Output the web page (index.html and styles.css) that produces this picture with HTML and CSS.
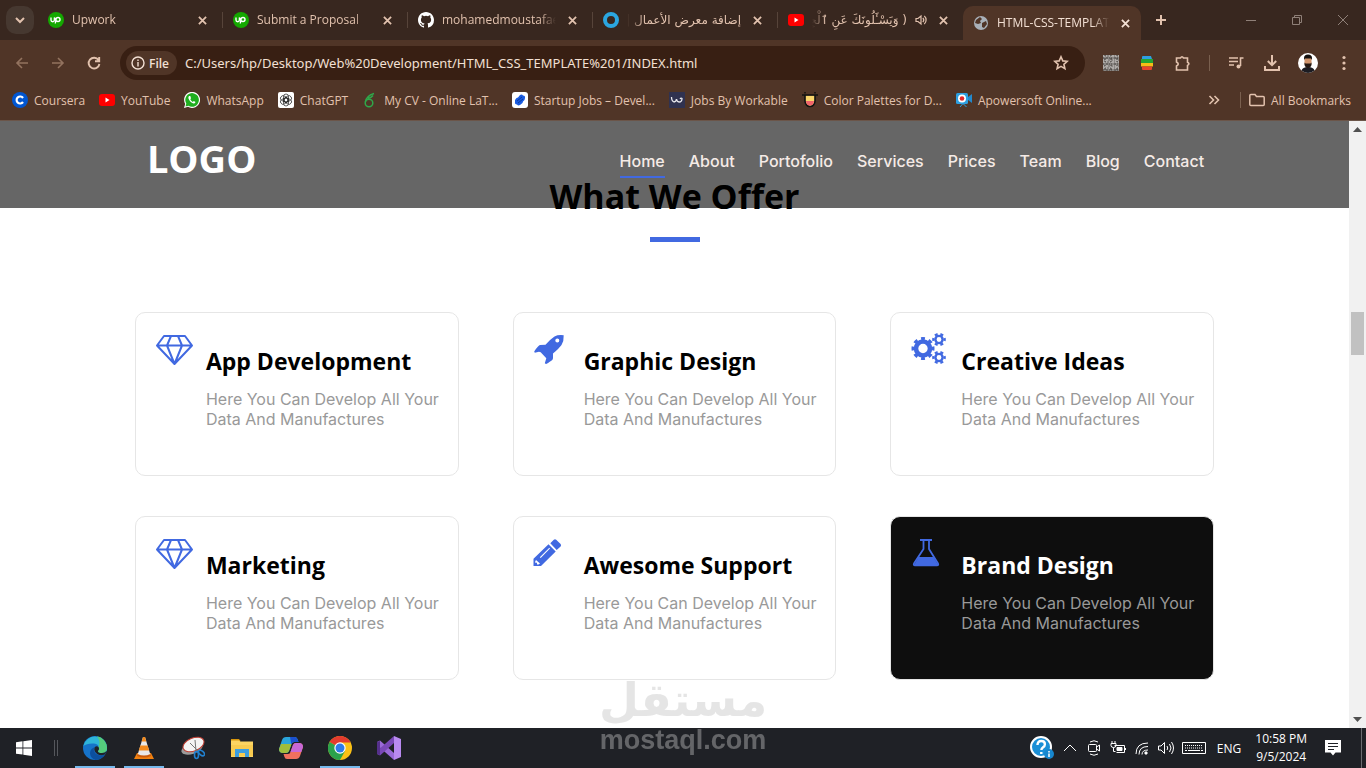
FILE: index.html
```html
<!DOCTYPE html>
<html lang="en">
<head>
    <meta charset="UTF-8">
    <meta name="viewport" content="width=device-width, initial-scale=1.0">
    <title>HTML-CSS-TEMPLATE</title>
    <link rel="stylesheet" href="styles.css">
</head>
<body>
    <!-- Tab strip -->
    <div class="tab-strip">
        <button class="tab-search" aria-label="Search tabs">
            <svg width="10" height="8" viewBox="0 0 10 8" fill="none" stroke="currentColor" stroke-width="2"><path d="M1 2l4 4 4-4"/></svg>
        </button>
        <div class="tab">
            <svg class="icon" viewBox="0 0 16 16"><circle cx="8" cy="8" r="8" fill="#14a800"/><path d="M3 5.500v2.500a1.700 1.700 0 0 0 3.400 0V5.500c.8 2.500 1.600 4 3.600 4a2 2 0 1 0-2-2L7.300 11.500" fill="none" stroke="#fff" stroke-width="1.400"/></svg>
            <span class="tab-title">Upwork</span>
            <button class="close" aria-label="Close tab"><svg viewBox="0 0 10 10"><path d="M1 1l8 8M9 1l-8 8"/></svg></button>
        </div>
        <div class="tab">
            <svg class="icon" viewBox="0 0 16 16"><circle cx="8" cy="8" r="8" fill="#14a800"/><path d="M3 5.500v2.500a1.700 1.700 0 0 0 3.400 0V5.500c.8 2.500 1.600 4 3.600 4a2 2 0 1 0-2-2L7.300 11.500" fill="none" stroke="#fff" stroke-width="1.400"/></svg>
            <span class="tab-title">Submit a Proposal</span>
            <button class="close" aria-label="Close tab"><svg viewBox="0 0 10 10"><path d="M1 1l8 8M9 1l-8 8"/></svg></button>
        </div>
        <div class="tab">
            <svg class="icon" viewBox="0 0 16 16" fill="#fff"><path d="M8 0C3.580 0 0 3.580 0 8c0 3.540 2.290 6.530 5.470 7.590.4.070.550-.170.550-.380 0-.190-.010-.820-.010-1.490-2.010.370-2.530-.490-2.690-.940-.090-.230-.480-.940-.820-1.130-.280-.150-.680-.520-.010-.530.630-.010 1.080.580 1.230.820.720 1.210 1.870.870 2.330.660.070-.520.280-.870.510-1.070-1.780-.2-3.640-.890-3.640-3.950 0-.870.310-1.590.820-2.150-.080-.2-.360-1.020.080-2.120 0 0 .670-.210 2.200.820a7.600 7.600 0 0 1 4 0c1.530-1.040 2.200-.820 2.200-.820.440 1.100.160 1.920.080 2.120.510.560.820 1.270.820 2.150 0 3.070-1.870 3.750-3.650 3.950.290.250.540.730.540 1.480 0 1.070-.010 1.930-.010 2.200 0 .210.150.460.550.380A8 8 0 0 0 16 8c0-4.420-3.580-8-8-8z"/></svg>
            <span class="tab-title">mohamedmoustafaegy</span>
            <button class="close" aria-label="Close tab"><svg viewBox="0 0 10 10"><path d="M1 1l8 8M9 1l-8 8"/></svg></button>
        </div>
        <div class="tab">
            <svg class="icon" viewBox="0 0 16 16"><circle cx="8" cy="8" r="6" fill="none" stroke="#2ba6e0" stroke-width="4"/></svg>
            <span class="tab-title rtl" dir="rtl" lang="ar">إضافة معرض الأعمال |</span>
            <button class="close" aria-label="Close tab"><svg viewBox="0 0 10 10"><path d="M1 1l8 8M9 1l-8 8"/></svg></button>
        </div>
        <div class="tab tab-last">
            <svg class="icon" viewBox="0 0 16 16"><rect y="2" width="16" height="12" rx="3" fill="#f00"/><path d="M6.500 5.500v5l4-2.500z" fill="#fff"/></svg>
            <span class="tab-title rtl" dir="rtl" lang="ar">( وَيَسْـَٔلُونَكَ عَنِ ٱلْجِبَالِ</span>
            <svg class="sound" viewBox="0 0 12 12" fill="none" stroke="currentColor" stroke-width="1.200"><path d="M1 4.500v3h2l3 2.500V2L3 4.500zM7.800 4c1.200 1.200 1.200 2.800 0 4M9.300 2c2.400 2.200 2.400 5.800 0 8"/></svg>
            <button class="close" aria-label="Close tab"><svg viewBox="0 0 10 10"><path d="M1 1l8 8M9 1l-8 8"/></svg></button>
        </div>
        <div class="tab tab-active">
            <svg class="icon" viewBox="0 0 16 16"><circle cx="8" cy="8" r="7" fill="#a9b0b8"/><path d="M3 5l4-3 2 2-2 2 1 2-3 1-3-1zM9 8l4-2 1 3-3 4-2-1z" fill="#503527"/></svg>
            <span class="tab-title">HTML-CSS-TEMPLATE</span>
            <button class="close" aria-label="Close tab"><svg viewBox="0 0 10 10"><path d="M1 1l8 8M9 1l-8 8"/></svg></button>
        </div>
        <button class="new-tab" aria-label="New tab">
            <svg width="12" height="12" viewBox="0 0 12 12" stroke="currentColor" stroke-width="2"><path d="M6 1v10M1 6h10"/></svg>
        </button>
        <div class="window-controls">
            <button aria-label="Minimize"><svg viewBox="0 0 10 10"><path d="M0 5.500h10"/></svg></button>
            <button aria-label="Restore"><svg viewBox="0 0 10 10"><path d="M.5 2.500h7v7h-7zM2.500 2.500v-2h7v7h-2"/></svg></button>
            <button aria-label="Close"><svg viewBox="0 0 10 10"><path d="M0 0l10 10M10 0L0 10"/></svg></button>
        </div>
    </div>

    <!-- Toolbar -->
    <div class="toolbar">
        <button class="tool dim" aria-label="Back"><svg class="icon" viewBox="0 0 16 16"><path d="M14 8H3M8 3L3 8l5 5"/></svg></button>
        <button class="tool dim" aria-label="Forward"><svg class="icon" viewBox="0 0 16 16"><path d="M2 8h11M8 3l5 5-5 5"/></svg></button>
        <button class="tool" aria-label="Reload"><svg class="icon" viewBox="0 0 16 16"><path d="M12.500 5a5.400 5.400 0 1 0 .9 4M13.200 2v4.200H9" stroke-width="1.900"/></svg></button>
        <div class="omnibox">
            <button class="file-chip">
                <svg width="14" height="14" viewBox="0 0 14 14" fill="none" stroke="currentColor" stroke-width="1.400"><circle cx="7" cy="7" r="6"/><path d="M7 6v4.500M7 3.500V5"/></svg>
                File
            </button>
            <input type="text" aria-label="Address" value="C:/Users/hp/Desktop/Web%20Development/HTML_CSS_TEMPLATE%201/INDEX.html">
            <button class="tool" aria-label="Bookmark this page"><svg class="icon" viewBox="0 0 16 16"><path d="M8 1.800l1.800 4.100 4.500.4-3.400 3 1 4.400L8 11.400l-3.900 2.300 1-4.400-3.400-3 4.500-.4z"/></svg></button>
        </div>
        <div class="extensions">
            <button class="tool" aria-label="QR code">
                <svg class="icon" viewBox="0 0 16 16"><rect width="16" height="16" fill="#8a8683" stroke="none"/><path d="M0 1h16M0 7h16M0 13h16" stroke="#d2cecb" stroke-width="1" stroke-dasharray="2 1 1 2 1 1 3 1"/><path d="M0 3h16M0 9h16M0 15h16" stroke="#4b4643" stroke-width="1" stroke-dasharray="1 2 2 1 1 1"/><path d="M0 5h16M0 11h16" stroke="#d2cecb" stroke-width="1" stroke-dasharray="1 1 3 2 1 2"/><path d="M2 0v16M8 0v16M14 0v16" stroke="#3b3633" stroke-width="1" stroke-dasharray="1 2 2 1 1 3"/></svg>
            </button>
            <button class="tool" aria-label="Color picker">
                <svg class="icon" viewBox="0 0 16 16" stroke="none"><path d="M3 2q0-1 1-1h8l1 3H3z" fill="#2d9fe0"/><path d="M2 4h12v4H2z" fill="#23a532"/><path d="M2 8h12v3.500H2z" fill="#f6bd16"/><path d="M3 11.500h10V14q0 1-1 1H4q-1 0-1-1z" fill="#e5442c"/></svg>
            </button>
            <button class="tool" aria-label="Extensions"><svg class="icon" viewBox="0 0 16 16"><path d="M1.500 3h4q1.500-2.500 3 0h4v4.200q2.800 1.500 0 3.200V15h-11v-4q3.500-2 0-4z"/></svg></button>
            <span class="divider"></span>
            <button class="tool" aria-label="Media"><svg class="icon" viewBox="0 0 16 16"><path d="M1 3h9M1 6.500h9M1 10h5M15.500 3h-3v8"/><circle cx="10.500" cy="11.500" r="2" fill="currentColor" stroke="none"/></svg></button>
            <button class="tool" aria-label="Downloads"><svg class="icon" viewBox="0 0 16 16"><path d="M8 0v10M3.800 6L8 10.200 12.200 6M1 11v4h14v-4" stroke-width="2"/></svg></button>
            <button class="tool" aria-label="Profile">
                <svg width="20" height="20" viewBox="0 0 20 20" stroke="none"><circle cx="10" cy="10" r="10" fill="#fff"/><path d="M3.500 17.500q1-3.500 6.500-3.500t6.500 3.500A10 10 0 0 1 3.500 17.500z" fill="#1c1c22"/><rect x="6.500" y="3.500" width="7" height="10" rx="3.500" fill="#d0946c"/><path d="M6 7V5q0-3.500 4-3.500T14 5v2l-1-1.500H7z" fill="#15110f"/><path d="M6.500 9.500l1 1h5l1-1v2.500q-1 3-3.500 3t-3.500-3z" fill="#241813"/></svg>
            </button>
            <button class="tool" aria-label="Menu"><svg class="icon" viewBox="0 0 16 16" stroke="none" fill="currentColor"><circle cx="8" cy="2.500" r="1.600"/><circle cx="8" cy="8" r="1.600"/><circle cx="8" cy="13.500" r="1.600"/></svg></button>
        </div>
    </div>

    <!-- Bookmarks -->
    <nav class="bookmarks" aria-label="Bookmarks">
        <a href="#"><svg class="icon" viewBox="0 0 16 16"><circle cx="8" cy="8" r="8" fill="#0056d2"/><path d="M11 6a3.500 3.500 0 1 0 0 4" fill="none" stroke="#fff" stroke-width="2.200"/></svg>Coursera</a>
        <a href="#"><svg class="icon" viewBox="0 0 16 16"><rect y="2" width="16" height="12" rx="3" fill="#f00"/><path d="M6.500 5.500v5l4-2.500z" fill="#fff"/></svg>YouTube</a>
        <a href="#"><svg class="icon" viewBox="0 0 16 16"><path d="M0 16l1.200-4A8 8 0 1 1 4 14.800z" fill="#fff"/><path d="M1.500 14.500l.8-3A6.800 6.800 0 1 1 4.500 13.700z" fill="#1fae1f"/><path d="M5 4q-1 1-.5 2.500 1.500 4 5 5 1.500 0 2-1.500L9.800 9l-1 .9Q7 9 6.300 7.300L7 6.200 6.300 4z" fill="#fff"/></svg>WhatsApp</a>
        <a href="#"><svg class="icon" viewBox="0 0 16 16"><rect width="16" height="16" rx="2" fill="#fff"/><g fill="none" stroke="#222" stroke-width=".7"><rect x="5.500" y="2" width="5" height="8" rx="2.500"/><rect x="5.500" y="2" width="5" height="8" rx="2.500" transform="rotate(60 8 8)"/><rect x="5.500" y="2" width="5" height="8" rx="2.500" transform="rotate(120 8 8)"/><rect x="5.500" y="2" width="5" height="8" rx="2.500" transform="rotate(180 8 8)"/><rect x="5.500" y="2" width="5" height="8" rx="2.500" transform="rotate(240 8 8)"/><rect x="5.500" y="2" width="5" height="8" rx="2.500" transform="rotate(300 8 8)"/></g></svg>ChatGPT</a>
        <a href="#"><svg class="icon" viewBox="0 0 16 16" fill="none" stroke="#2fa84a" stroke-width="1.500"><circle cx="7" cy="11" r="3.800"/><path d="M3.500 10Q4 4 12 1.500M6 6.500Q9 6 11 3.500"/></svg>My CV - Online LaT...</a>
        <a href="#"><svg class="icon" viewBox="0 0 16 16"><rect width="16" height="16" rx="3" fill="#fff"/><path d="M3 8l1.500-2L6 5.500 8 3q2-1 3 .5 2.500 0 2 2.500l-.5 2-1.500 1.500-.5 1.500L8 13q-2 1-3-.5-2.500-.5-2-2.500z" fill="#1a5be0"/><path d="M5 9l5-4M6 11l5-4" stroke="#0a3ca0" fill="none"/></svg>Startup Jobs – Devel...</a>
        <a href="#"><svg class="icon" viewBox="0 0 16 16"><rect width="16" height="16" fill="#303250"/><path d="M2.500 5q0 4 2.500 5 2 0 2.500-3 .5 3 2.500 3 3 0 3-3.500-1-1-2 .5" fill="none" stroke="#e8e8ee" stroke-width="1.300"/></svg>Jobs By Workable</a>
        <a href="#"><svg class="icon" viewBox="0 0 16 16"><path d="M0 3h16M3 3.500V9a5 5.500 0 0 0 10 0V3.500" fill="#f9d56b" stroke="#111" stroke-width="1.600"/><path d="M4 9h8a4 4.500 0 0 1-8 0z" fill="#f0636b"/><path d="M3 0v1.500M13 0v1.500" stroke="#111" stroke-width="1.500"/></svg>Color Palettes for D...</a>
        <a href="#"><svg class="icon" viewBox="0 0 16 16"><rect y="1" width="12" height="11" rx="1.500" fill="#2d9fe0"/><path d="M12 5l4-3v9l-4-3z" fill="#2389cc"/><circle cx="6" cy="6.500" r="4" fill="#fff"/><circle cx="6" cy="6.500" r="2.300" fill="#e3262b"/><path d="M4 15l2.500-3h1l3 3" fill="none" stroke="#2d9fe0"/></svg>Apowersoft Online...</a>
        <div class="bookmarks-end">
            <button class="tool" aria-label="More bookmarks"><svg width="12" height="12" viewBox="0 0 12 12"><path d="M1.500 2l4 4-4 4M6.500 2l4 4-4 4"/></svg></button>
            <span class="divider"></span>
            <a href="#"><svg class="icon" viewBox="0 0 16 16" fill="none" stroke="currentColor" stroke-width="1.500"><path d="M.8 3.500q0-1 1-1H6l1.500 2h6.700q1 0 1 1v7q0 1-1 1H1.800q-1 0-1-1z"/></svg>All Bookmarks</a>
        </div>
    </nav>

    <!-- Web page -->
    <div class="viewport">
        <div class="page">
            <header>
                <div class="container header-inner">
                    <a class="logo" href="#">LOGO</a>
                    <ul class="menu">
                        <li><a class="active" href="#">Home</a></li>
                        <li><a href="#">About</a></li>
                        <li><a href="#">Portofolio</a></li>
                        <li><a href="#">Services</a></li>
                        <li><a href="#">Prices</a></li>
                        <li><a href="#">Team</a></li>
                        <li><a href="#">Blog</a></li>
                        <li><a href="#">Contact</a></li>
                    </ul>
                </div>
            </header>

            <section class="offer">
                <h2>What We Offer</h2>
                <div class="container cards">
                    <article class="card">
                        <svg viewBox="0 0 38 32" fill="none" stroke="currentColor" stroke-width="2" stroke-linejoin="round"><path d="M1 12.500L8 3h21l7 9.500L18.500 31zM1 12.500h35M15 3l-4 9.500L18.500 31 26 12.500 22 3"/></svg>
                        <div>
                            <h3>App Development</h3>
                            <p>Here You Can Develop All Your Data And Manufactures</p>
                        </div>
                    </article>
                    <article class="card">
                        <svg viewBox="0 0 38 32" fill="currentColor" fill-rule="evenodd"><path d="M29.700 2.200Q24 1.500 20.500 3.500 16 6.500 11.500 11.700L6 12Q4.500 12 .2 18.500l.6 1.200 4.200-.9 1.700.5 5.600 6-1.500 5 1.200.7q1-.2 6-3.700 1-.7 1-2.300v-4.500Q25 15.500 27.500 12q2.500-4 2.200-9.800zM25.300 7.500a2 2 0 1 1-4 0 2 2 0 0 1 4 0z"/></svg>
                        <div>
                            <h3>Graphic Design</h3>
                            <p>Here You Can Develop All Your Data And Manufactures</p>
                        </div>
                    </article>
                    <article class="card">
                        <svg viewBox="0 0 38 32" fill="none" stroke="currentColor">
                            <circle cx="12" cy="15.500" r="7" stroke-width="4.600"/>
                            <circle cx="12" cy="15.500" r="9.800" stroke-width="3.400" pathLength="16" stroke-dasharray="1 1" stroke-dashoffset=".5"/>
                            <circle cx="28" cy="6.500" r="3.600" stroke-width="2.400"/>
                            <circle cx="28" cy="6.500" r="5.600" stroke-width="2.400" pathLength="12" stroke-dasharray="1 1" stroke-dashoffset=".5"/>
                            <circle cx="28" cy="24.500" r="3.600" stroke-width="2.400"/>
                            <circle cx="28" cy="24.500" r="5.600" stroke-width="2.400" pathLength="12" stroke-dasharray="1 1" stroke-dashoffset=".5"/>
                        </svg>
                        <div>
                            <h3>Creative Ideas</h3>
                            <p>Here You Can Develop All Your Data And Manufactures</p>
                        </div>
                    </article>
                    <article class="card">
                        <svg viewBox="0 0 38 32" fill="none" stroke="currentColor" stroke-width="2" stroke-linejoin="round"><path d="M1 12.500L8 3h21l7 9.500L18.500 31zM1 12.500h35M15 3l-4 9.500L18.500 31 26 12.500 22 3"/></svg>
                        <div>
                            <h3>Marketing</h3>
                            <p>Here You Can Develop All Your Data And Manufactures</p>
                        </div>
                    </article>
                    <article class="card">
                        <svg viewBox="0 0 38 32" fill="currentColor" fill-rule="evenodd"><path d="M16.300 6.300L19.800 2.700q1.200-1 2.400 0l4.400 4.400q1 1.200 0 2.400l-3.900 3.600zM14.500 7.300l7.200 7.200L7 29H-.5v-7.300zM2 23l-.8 1.500v1.300H3v1.700h1.500L6 26.500zM5.800 20.300l.9.600 9.300-9.300-.7-.8z"/></svg>
                        <div>
                            <h3>Awesome Support</h3>
                            <p>Here You Can Develop All Your Data And Manufactures</p>
                        </div>
                    </article>
                    <article class="card card-dark">
                        <svg viewBox="0 0 38 32" fill="none" stroke="currentColor" stroke-width="1.800" stroke-linejoin="round"><path d="M9 3h12M12.500 3v9L3 26.500q-.8 1.800 1 1.800h22q1.800 0 1-1.800L18 12V3"/><path d="M7.500 20h15l4.800 8.300H3z" fill="currentColor" stroke="none"/></svg>
                        <div>
                            <h3>Brand Design</h3>
                            <p>Here You Can Develop All Your Data And Manufactures</p>
                        </div>
                    </article>
                </div>
            </section>
        </div>
        <div class="scrollbar">
            <svg width="9" height="5" viewBox="0 0 9 5"><path d="M0 5l4.500-5L9 5z"/></svg>
            <div class="track"><div class="thumb"></div></div>
            <svg width="9" height="5" viewBox="0 0 9 5"><path d="M0 0l4.500 5L9 0z"/></svg>
        </div>
    </div>

    <!-- Taskbar -->
    <footer class="taskbar">
        <button class="start" aria-label="Start"><svg width="16" height="16" viewBox="0 0 16 16" fill="#fff"><path d="M0 2.200l6.500-.9v6.200H0zM7.300 1.200L16 0v7.500H7.300zM0 8.400h6.500v6.200L0 13.700zM7.300 8.400H16V16l-8.700-1.200z"/></svg></button>
        <span class="grip"></span>
        <button class="app running" aria-label="Edge">
            <svg viewBox="0 0 24 24"><circle cx="12" cy="12" r="12" fill="#1673c9"/><path d="M.3 10A12 12 0 0 1 24 12q0 5-5 5-4 0-4-2 1-1 1-3 0-4-5-4.500Q4 7 .3 10z" fill="#2fb5d8"/><path d="M14 .3A12 12 0 0 1 24 12q0 5-5 5-4 0-4-2 1.500-2 .5-4.500Q18 6 14 .3z" fill="#55cc7c"/><path d="M22 18.500q-4 2-8 0-4-2.500-3-7-4 1.500-4 6 .5 5 5.500 6.400A12 12 0 0 0 22 18.500z" fill="#0c4f9e"/><path d="M15 15q-.5 2 4 2 3 0 4.500-2l-1.300 3.300q-4 1.700-7.700 0-4-2.800-3-6.800 2-2 4-.5 1.500 2-.5 4z" fill="#202228"/></svg>
        </button>
        <button class="app running" aria-label="VLC">
            <svg viewBox="0 0 24 24"><path d="M5 17h14l3 6H2z" fill="#f0800f"/><path d="M11 1h2l5.500 18q-6.500 3-13 0z" fill="#e8e8e8"/><path d="M11 1h2l1.300 4.500H9.700zM8.400 9.500h7.200l1.600 5H6.800z" fill="#f28a1c"/><path d="M5.500 18q6.500 3 13 0l.5 2q-7 3-14 0z" fill="#c95a0a"/></svg>
        </button>
        <button class="app" aria-label="Snipping Tool">
            <svg viewBox="0 0 24 24"><ellipse cx="11" cy="12.500" rx="11" ry="5.500" fill="#9b9b9b" transform="rotate(-18 11 12.500)"/><ellipse cx="12.500" cy="8.500" rx="11" ry="6.500" fill="#f4f4f4" stroke="#bf3d31" transform="rotate(-22 12.500 8.500)"/><path d="M9 7l8 8M14 4l1 11" stroke="#777"/><g fill="none" stroke="#2180cf" stroke-width="1.600"><ellipse cx="15.500" cy="19" rx="2" ry="3.500"/><ellipse cx="20.500" cy="17" rx="2" ry="3.500" transform="rotate(-50 20.500 17)"/></g></svg>
        </button>
        <button class="app" aria-label="File Explorer">
            <svg viewBox="0 0 24 24"><path d="M1 3h8l1.500 2H1z" fill="#d8960c"/><path d="M1 4.500h8l1.500 1H23V21H1z" fill="#fcd462"/><path d="M1 9h22v11H1z" fill="#f8cb50"/><path d="M5 13h14v8h-4v-4H9v4H5z" fill="#3d9ee0"/></svg>
        </button>
        <button class="app" aria-label="Copilot">
            <svg viewBox="0 0 24 24"><path d="M7 1h9q2 0 2.700 2.500L19.500 6H15q-2 0-2.700 2.500L10 15q-.7 2-3 2H4q-4 0-4-4L3 4q1-3 4-3z" fill="#2aa5dc"/><path d="M2 8h10.500L10 15q-.7 2-3 2H4q-4 0-4-4z" fill="#a0bd3c"/><path d="M11 1h5q2 0 2.700 2.500L19.500 6H15q-2 0-2.700 2.500z" fill="#1b50cf"/><path d="M17 23H8q-2 0-2.700-2.500L4.500 18H9q2 0 2.700-2.500L14 9q.7-2 3-2h3q4 0 4 4l-3 9q-1 3-4 3z" fill="#f0705e"/><path d="M13.300 11L14 9q.7-2 3-2h3q4 0 4 4l-1.700 5H11.500z" fill="#c768d8"/></svg>
        </button>
        <button class="app running" aria-label="Chrome">
            <svg viewBox="0 0 24 24"><circle cx="12" cy="12" r="12" fill="#fbc116"/><path d="M12 12L1.600 6A12 12 0 0 1 22.400 6z" fill="#e33b2e"/><path d="M12 12L1.600 6A12 12 0 0 0 12 24l5-9z" fill="#2ba24c"/><path d="M12 6h10.400L17 12z" fill="#fbc116"/><path d="M12 6.500h10.600L20 4 12 3z" fill="#e33b2e"/><circle cx="12" cy="12" r="5.700" fill="#fff"/><circle cx="12" cy="12" r="4.500" fill="#2f7bea"/></svg>
        </button>
        <button class="app" aria-label="Visual Studio">
            <svg viewBox="0 0 24 24"><path d="M17 0l7 3v18l-7 3z" fill="#b98af0"/><path d="M0 6l3-1.500L17 17v7L0 9z" fill="#9a6ad8"/><path d="M0 18l3 1.500L17 7V0L0 15z" fill="#7a49b8"/><path d="M0 6l3-1v14l-3-1z" fill="#55308c"/></svg>
        </button>
        <div class="tray">
            <svg class="help" viewBox="0 0 24 24"><circle cx="11" cy="11" r="10" fill="#1b8fd6" stroke="#fff" stroke-width="2"/><path d="M7.500 9q0-4 3.700-4t3.700 3.200q0 2-2 3.200-1.500 1-1.500 2.600M11.300 16v2" fill="none" stroke="#fff" stroke-width="2.400"/><circle cx="19" cy="18" r="5" fill="#1787cf"/><path d="M19 15v1.500M19 17.500v3.500" stroke="#fff" stroke-width="1.500"/></svg>
            <svg class="icon" viewBox="0 0 16 16"><path d="M2 11l6-6 6 6"/></svg>
            <svg class="icon" viewBox="0 0 16 16"><path d="M3.500 4.500h6q1 0 1 1v5q0 1-1 1h-6q-1 0-1-1v-5q0-1 1-1zM10.500 7l3-2v6l-3-2M4 2q4-2.500 8 0M4 14q4 2.500 8 0"/></svg>
            <svg class="icon" viewBox="0 0 16 16"><path d="M4.500 5.500h10v7h-8M15.500 8v2M2 1v2.500M5 1v2.500M1 3.500h5v2q0 2-2.500 2T1 5.500zM3.500 7.500v4h2"/><path d="M7 7.500h5v3H7z" fill="currentColor"/></svg>
            <svg class="icon" viewBox="0 0 16 16"><path d="M2 14Q2 3 14 3M5 14.500Q5 6.500 14 6.500M8 14.500Q8 10 14 10"/><path d="M11 12h2v2h-2z" fill="currentColor"/></svg>
            <svg class="icon" viewBox="0 0 16 16"><path d="M.5 6v4H3l3.500 3.500v-11L3 6zM9 6q1.500 2 0 4M11.500 4q3 4 0 8M13.500 2q4 6 0 12"/></svg>
            <svg class="keyboard" viewBox="0 0 24 14"><path d="M.5 1.500h23v11H.5z"/><path d="M3 4.500h18M3 7h18" stroke-dasharray="1 1"/><path d="M3 9.500h2M6 9.500h12M19 9.500h2"/></svg>
            <span class="lang">ENG</span>
            <div class="clock"><span>10:58 PM</span><span>9/5/2024</span></div>
            <svg class="icon notes" viewBox="0 0 16 16"><path d="M0 0h16v12.500h-5.500L8 15.500l-2.500-3H0z" fill="#fff" stroke="none"/><path d="M3 3.500h10M3 6.500h10M3 9.500h6" stroke="#1f2126"/></svg>
        </div>
    </footer>

    <div class="watermark">
        <span class="watermark-ar" lang="ar" dir="rtl">مستقل</span>
        <span class="watermark-en">mostaql.com</span>
    </div>
</body>
</html>
```

FILE: styles.css
```css
:root {
    --strip: #38271f;
    --toolbar: #503527;
    --omnibox: #381f13;
    --chrome-text: #e2c2ae;
    --main-color: #4169e1;
    --text: #999999;
    --border: #e6e6e6;
}

* {
    margin: 0;
    padding: 0;
    box-sizing: border-box;
}

body {
    font-family: "Open Sans", "Noto Sans", sans-serif;
    font-size: 12px;
    height: 100vh;
    display: flex;
    flex-direction: column;
    overflow: hidden;
    position: relative;
    background-color: var(--toolbar);
}

button {
    font: inherit;
    color: inherit;
    background: none;
    border: none;
    display: flex;
    align-items: center;
    justify-content: center;
}

a {
    color: inherit;
    text-decoration: none;
}

.icon {
    width: 16px;
    height: 16px;
    flex: none;
}

/* Tab strip */
.tab-strip {
    display: flex;
    align-items: center;
    height: 40px;
    flex: none;
    padding-left: 6px;
    background-color: var(--strip);
    color: var(--chrome-text);
}

.tab-search {
    width: 28px;
    height: 28px;
    margin-right: 4px;
    border-radius: 10px;
    background-color: #463830;
}

.tab {
    display: flex;
    align-items: center;
    gap: 8px;
    flex: 0 1 185px;
    min-width: 0;
    height: 16px;
    padding: 0 12px 0 10px;
    border-right: 1px solid #57443a;
}

.tab-title {
    flex: 1;
    overflow: hidden;
    white-space: nowrap;
    line-height: 20px;
    mask-image: linear-gradient(to right, #000 85%, transparent);
}

.tab-title.rtl {
    font-family: "DejaVu Sans", sans-serif;
    mask-image: linear-gradient(to left, #000 85%, transparent);
}

.tab-last {
    border-right: none;
}

.tab-active {
    flex-basis: 178px;
    height: 34px;
    align-self: flex-end;
    padding-right: 8px;
    border-right: none;
    border-radius: 10px 10px 0 0;
    background-color: var(--toolbar);
    color: #f3e0d4;
}

.sound {
    width: 12px;
    height: 12px;
    flex: none;
}

.close {
    width: 16px;
    height: 16px;
    flex: none;
}

.close svg {
    width: 9px;
    height: 9px;
    stroke: currentColor;
    stroke-width: 2;
}

.new-tab {
    width: 28px;
    height: 28px;
    margin-left: 6px;
}

.window-controls {
    display: flex;
    margin-left: auto;
    color: #8f8078;
}

.window-controls button {
    width: 46px;
    height: 40px;
}

.window-controls svg {
    width: 10px;
    height: 10px;
    fill: none;
    stroke: currentColor;
}

/* Toolbar */
.toolbar {
    display: flex;
    align-items: center;
    flex: none;
    height: 46px;
    padding: 0 4px;
    color: var(--chrome-text);
}

.tool {
    width: 36px;
    height: 28px;
    flex: none;
}

.tool svg {
    fill: none;
    stroke: currentColor;
    stroke-width: 1.6;
}

.tool svg[stroke="none"] {
    stroke: none;
}

.tool svg[fill="currentColor"] {
    fill: currentColor;
}

.dim {
    color: #93735f;
}

.omnibox {
    display: flex;
    align-items: center;
    flex: 1;
    height: 34px;
    margin-left: 8px;
    padding: 0 6px;
    border-radius: 17px;
    background-color: var(--omnibox);
}

.file-chip {
    gap: 4px;
    height: 24px;
    padding: 0 8px 0 5px;
    border-radius: 12px;
    background-color: var(--toolbar);
    color: #f3e0d4;
    font-weight: 600;
}

.omnibox input {
    flex: 1;
    min-width: 0;
    margin-left: 8px;
    border: none;
    outline: none;
    background: none;
    color: #f3e0d4;
    font-family: "Noto Sans", sans-serif;
    font-size: 13px;
}

.extensions {
    display: flex;
    align-items: center;
    margin-left: 8px;
}

.divider {
    width: 1px;
    height: 16px;
    margin: 0 8px;
    background-color: #7a604f;
}

/* Bookmarks */
.bookmarks {
    display: flex;
    align-items: center;
    gap: 14px;
    flex: none;
    height: 35px;
    padding: 0 15px 6px 12px;
    border-bottom: 1px solid #6b5549;
    color: var(--chrome-text);
    white-space: nowrap;
}

.bookmarks a {
    display: flex;
    align-items: center;
    gap: 6px;
}

.bookmarks-end {
    display: flex;
    align-items: center;
    margin-left: auto;
}

/* Web page */
.viewport {
    display: flex;
    flex: 1;
    min-height: 0;
    background-color: #fff;
}

.page {
    flex: 1;
    position: relative;
    overflow: hidden;
    font-family: Inter, sans-serif;
    font-size: 16px;
}

.container {
    width: 80%;
    margin: 0 auto;
}

header {
    position: absolute;
    top: 0;
    left: 0;
    right: 0;
    padding: 20px 0 30px;
    background-color: rgba(0, 0, 0, 0.6);
}

.header-inner {
    display: flex;
    justify-content: space-between;
    padding: 0 10px 0 12px;
}

.logo {
    font-family: "Open Sans", sans-serif;
    font-size: 38px;
    font-weight: 700;
    line-height: 35px;
    color: #fff;
}

.menu {
    display: flex;
    gap: 24px;
    height: 37px;
    padding-top: 10px;
    list-style: none;
}

.menu a {
    display: block;
    padding-bottom: 5px;
    border-bottom: 2px solid transparent;
    font-weight: 500;
    line-height: 20px;
    color: #f5ebe6;
}

.menu a.active {
    border-color: var(--main-color);
}

.offer {
    padding-top: 50px;
}

h2,
h3 {
    font-family: "Open Sans", "Noto Sans", sans-serif;
    font-weight: 700;
    color: #000;
}

h2 {
    font-size: 34px;
    line-height: 50px;
    text-align: center;
}

h2::after {
    content: "";
    display: block;
    width: 50px;
    height: 5px;
    margin: 16px auto 70px;
    background-color: var(--main-color);
}

.cards {
    display: grid;
    grid-template-columns: repeat(3, 30%);
    justify-content: space-between;
    row-gap: 40px;
}

.card {
    display: flex;
    gap: 12px;
    padding: 20px 16px 46px 20px;
    border: 1px solid var(--border);
    border-radius: 10px;
}

.card svg {
    width: 38px;
    height: 32px;
    flex: none;
    overflow: visible;
    color: var(--main-color);
}

h3 {
    margin: 12px 0;
    font-size: 23px;
    line-height: 32px;
    white-space: nowrap;
}

.card p {
    line-height: 20px;
    color: var(--text);
}

.card-dark {
    background-color: #0e0e0e;
}

.card-dark h3 {
    color: #fff;
}

.scrollbar {
    display: flex;
    flex-direction: column;
    align-items: center;
    width: 17px;
    padding: 6px 0;
    background-color: #f1f1f1;
}

.scrollbar svg {
    fill: #505050;
}

.track {
    flex: 1;
    width: 100%;
    padding: 180px 2px 0;
}

.thumb {
    height: 43px;
    background-color: #c1c1c1;
}

/* Taskbar */
.taskbar {
    display: flex;
    flex: none;
    height: 40px;
    background-color: #1f2126;
    color: #fff;
}

.start {
    width: 48px;
}

.grip {
    width: 4px;
    height: 16px;
    margin: 12px 13px 0 6px;
    border: solid #55575c;
    border-width: 0 1px;
}

.app {
    width: 40px;
    margin: 0 5px 0 4px;
    padding-top: 2px;
    border-bottom: 2px solid transparent;
}

.app svg {
    width: 24px;
    height: 24px;
}

.running {
    border-color: #76b9ed;
}

.tray {
    display: flex;
    align-items: center;
    gap: 8px;
    margin-left: auto;
    margin-right: 4px;
    padding-right: 20px;
    border-right: 1px solid #6a6c70;
}

.tray .icon,
.keyboard {
    fill: none;
    stroke: currentColor;
}

.help {
    width: 24px;
    height: 24px;
}

.keyboard {
    width: 24px;
    height: 14px;
}

.lang {
    margin-left: 3px;
}

.clock {
    display: flex;
    flex-direction: column;
    align-items: center;
    margin-left: 6px;
    margin-right: 10px;
    line-height: 18px;
}

/* Watermark over the page and the taskbar */
.watermark {
    position: absolute;
    left: 50%;
    bottom: 12px;
    transform: translateX(-50%);
    display: flex;
    flex-direction: column;
    align-items: center;
    font-weight: 700;
    color: #c3c3c3;
    opacity: 0.42;
    pointer-events: none;
}

.watermark-ar {
    font-family: "DejaVu Sans", sans-serif;
    font-size: 46px;
    line-height: 48px;
}

.watermark-en {
    font-family: "Liberation Sans", sans-serif;
    font-size: 27px;
    line-height: 32px;
}
```
